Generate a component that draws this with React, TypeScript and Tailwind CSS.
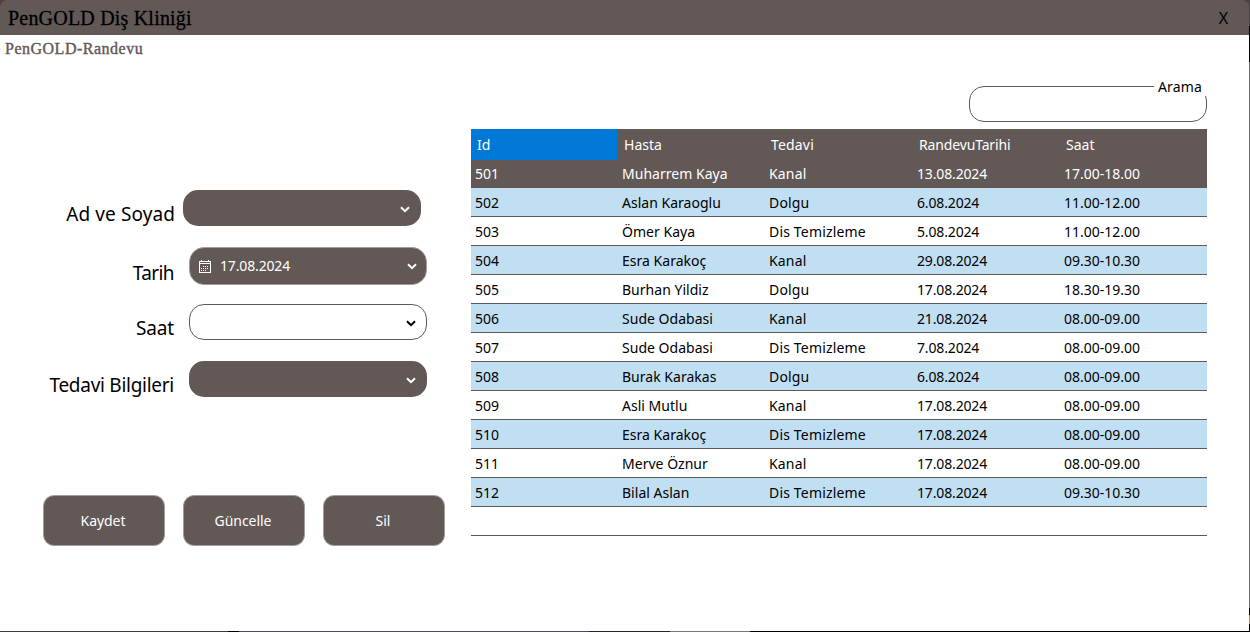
import React from "react";

type Row = [string, string, string, string, string];

const HEADERS: Row = ["Id", "Hasta", "Tedavi", "RandevuTarihi", "Saat"];

const ROWS: Row[] = [
  ["501", "Muharrem Kaya", "Kanal", "13.08.2024", "17.00-18.00"],
  ["502", "Aslan Karaoglu", "Dolgu", "6.08.2024", "11.00-12.00"],
  ["503", "Ömer Kaya", "Dis Temizleme", "5.08.2024", "11.00-12.00"],
  ["504", "Esra Karakoç", "Kanal", "29.08.2024", "09.30-10.30"],
  ["505", "Burhan Yildiz", "Dolgu", "17.08.2024", "18.30-19.30"],
  ["506", "Sude Odabasi", "Kanal", "21.08.2024", "08.00-09.00"],
  ["507", "Sude Odabasi", "Dis Temizleme", "7.08.2024", "08.00-09.00"],
  ["508", "Burak Karakas", "Dolgu", "6.08.2024", "08.00-09.00"],
  ["509", "Asli Mutlu", "Kanal", "17.08.2024", "08.00-09.00"],
  ["510", "Esra Karakoç", "Dis Temizleme", "17.08.2024", "08.00-09.00"],
  ["511", "Merve Öznur", "Kanal", "17.08.2024", "08.00-09.00"],
  ["512", "Bilal Aslan", "Dis Temizleme", "17.08.2024", "09.30-10.30"],
  ["", "", "", "", ""],
];

const GRID = "grid grid-cols-[147px_147px_148px_147px_147px]";

const COLUMN_TRACKING = [
  "tracking-[-0.05px]",
  "tracking-[0.02px]",
  "tracking-[0.17px]",
  "tracking-[-0.15px]",
  "tracking-[0px]",
];

function Chevron() {
  return (
    <svg width="10" height="7" viewBox="0 0 10 7" fill="none" stroke="currentColor" strokeWidth="2">
      <path d="M1 1.2 5 5.2 9 1.2" />
    </svg>
  );
}

function CalendarIcon() {
  return (
    <svg width="13" height="13" viewBox="0 0 13 13" fill="none" stroke="#fff" shapeRendering="crispEdges">
      <path d="M0.5 1.5h11v11h-11zM0 3.5h12M2.5 0v2M9.5 0v2" />
      <path d="M4 6.5h6M2 8.5h8M2 10.5h6" strokeDasharray="1 1" />
    </svg>
  );
}

function Label({ children, className }: { children: React.ReactNode; className: string }) {
  return (
    <label className={`shrink-0 text-right text-[19px] leading-[26px] whitespace-nowrap text-black ${className}`}>
      {children}
    </label>
  );
}

function ActionButton({ children }: { children: React.ReactNode }) {
  return (
    <button className="h-[51px] w-[122px] rounded-[11px] border border-[#a39c9b] bg-[#625856] pr-[2px] text-center tracking-[-0.05px] text-white">
      {children}
    </button>
  );
}

export default function App() {
  return (
    <div className="flex h-[632px] w-[1250px] overflow-hidden bg-white font-['Noto_Sans','Open_Sans',sans-serif] text-[14px] tracking-[-0.15px]">
      <div className="flex w-[1249px] flex-col">
        <div className="shrink-0 bg-[#4a4243]">
          <header className="flex h-[35px] items-center justify-between rounded-t-[7px] bg-[#625856] pr-[21px] pl-[8px] text-black">
            <h1 className="font-['Liberation_Serif',serif] text-[20px] leading-[34px] tracking-[0.2px] [-webkit-text-stroke:0.3px_black]">
              PenGOLD Diş Kliniği
            </h1>
            <button className="text-[16px] leading-[34px]">X</button>
          </header>
        </div>
        <h2 className="h-[28px] pl-[5px] font-['Liberation_Serif',serif] text-[16px] leading-[28px] tracking-[0.5px] text-[#625856] [-webkit-text-stroke:0.4px_#625856]">
          PenGOLD-Randevu
        </h2>

        <main className="flex flex-1">
          <section className="flex w-[471px] flex-col pt-[127px]">
            <div className="flex h-[36px]">
              <Label className="w-[175px] pt-[11px] tracking-[0.1px]">Ad ve Soyad</Label>
              <div className="ml-[8px] flex h-[36px] w-[238px] items-center justify-end rounded-[15px] bg-[#625856] pt-[2px] pr-[11px] text-white">
                <Chevron />
              </div>
            </div>
            <div className="mt-[21px] flex h-[38px]">
              <Label className="w-[174px] pt-[13px] tracking-[-0.6px]">Tarih</Label>
              <div className="ml-[15px] flex h-[38px] w-[238px] items-center rounded-[15px] border border-[#a39c9b] bg-[#625856] pr-[9px] pl-[9px] text-white">
                <CalendarIcon />
                <span className="ml-[8px] flex-1 pb-[2px]">17.08.2024</span>
                <span className="pt-px">
                  <Chevron />
                </span>
              </div>
            </div>
            <div className="mt-[19px] flex h-[36px]">
              <Label className="w-[174px] pt-[11px]">Saat</Label>
              <div className="ml-[15px] flex h-[36px] w-[238px] items-center justify-end rounded-[15px] border border-[#625856] bg-white pt-[2px] pr-[10px] text-black">
                <Chevron />
              </div>
            </div>
            <div className="mt-[21px] flex h-[36px]">
              <Label className="w-[174px] pt-[11px] tracking-[-0.27px]">Tedavi Bilgileri</Label>
              <div className="ml-[15px] flex h-[36px] w-[238px] items-center justify-end rounded-[15px] bg-[#625856] pt-[2px] pr-[11px] text-white">
                <Chevron />
              </div>
            </div>
            <div className="mt-[98px] ml-[43px] flex gap-[18px]">
              <ActionButton>Kaydet</ActionButton>
              <ActionButton>Güncelle</ActionButton>
              <ActionButton>Sil</ActionButton>
            </div>
          </section>

          <section className="w-[736px] pt-[23px]">
            <div className="relative ml-auto h-[36px] w-[238px] rounded-[15px] border border-[#625856]">
              <span className="absolute -top-[10px] -right-[1px] h-[19px] bg-white pr-[5px] pl-[4px] leading-[20px] tracking-[0.15px] text-black">
                Arama
              </span>
            </div>
            <div className="mt-[7px]">
              <div className={`${GRID} h-[30px] bg-[#625856] leading-[31px] text-white`}>
                {HEADERS.map((h, i) => (
                  <div key={h} className={`pl-[6px] ${COLUMN_TRACKING[i]} ${i === 0 ? "bg-[#0078d7]" : ""}`}>
                    {h}
                  </div>
                ))}
              </div>
              {ROWS.map((row, i) => (
                <div
                  key={i}
                  className={`${GRID} h-[29px] border-b border-[#625856] leading-[29px] ${
                    i === 0 ? "bg-[#625856] text-white" : i % 2 ? "bg-[#c1dff3] text-black" : "bg-white text-black"
                  }`}
                >
                  {row.map((cell, j) => (
                    <div key={j} className={`pl-[4px] whitespace-nowrap ${COLUMN_TRACKING[j]}`}>
                      {cell}
                    </div>
                  ))}
                </div>
              ))}
            </div>
          </section>
        </main>
        <div className="flex h-px shrink-0 bg-[#3c3c40]">
          <div className="ml-[228px] w-[11px] bg-black" />
          <div className="w-[350px] bg-[#4b4a58]" />
          <div className="w-[81px] bg-[#262426]" />
          <div className="w-[80px] bg-[#7c7778]" />
          <div className="flex-1 bg-black" />
        </div>
      </div>
      <div className="flex w-px flex-col">
        <div className="h-[26px] bg-[#4a4243]" />
        <div className="h-[36px] bg-black" />
        <div className="flex-1 bg-[#6d6d70]" />
        <div className="h-[7px] bg-black" />
        <div className="h-[9px] bg-[#b88860]" />
        <div className="h-[8px] bg-black" />
      </div>
    </div>
  );
}
